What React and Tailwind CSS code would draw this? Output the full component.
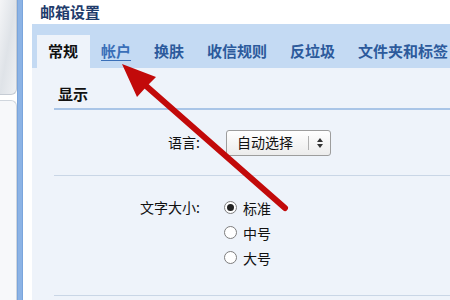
const font = { fontFamily: '"Noto Sans CJK SC", "Noto Sans", sans-serif' };

function Radio({ checked, label }) {
  return (
    <div className="flex items-center h-[25px]">
      <span className="w-[13px] h-[13px] rounded-full border border-[#7d7d7d] bg-white flex items-center justify-center">
        {checked && <span className="w-[7px] h-[7px] rounded-full bg-[#222]" />}
      </span>
      <span className="ml-[6px] text-[14px] text-[#111] leading-none">{label}</span>
    </div>
  );
}

function Arrow() {
  return (
    <svg className="absolute left-0 top-0 pointer-events-none" width="450" height="300" viewBox="0 0 450 300">
      <line x1="285" y1="208" x2="145" y2="85" stroke="#c20a0a" strokeWidth="6" strokeLinecap="round" />
      <polygon points="122,64 156,77 147,86 137,97" fill="#c20a0a" />
    </svg>
  );
}

export default function App() {
  const tabs = ['常规', '帐户', '换肤', '收信规则', '反垃圾', '文件夹和标签'];
  return (
    <div className="relative w-[450px] h-[300px] overflow-hidden bg-white flex" style={font}>
      <div className="w-[17px] shrink-0 flex flex-col">
        <div className="h-[95px] rounded-br-[6px] border-r border-b border-[#c6ccd4] bg-gradient-to-br from-[#f4f5f7] via-[#dfe3e8] to-[#eef0f3]" />
        <div className="mt-[5px] flex-1 rounded-tr-[6px] border-r border-t border-[#d0d6dd] bg-[#f7f8fa]" />
      </div>
      <div className="w-[6px] shrink-0 bg-[#8cb3e5] border-x border-[#7aa5dc]" />
      <div className="w-[9px] shrink-0 bg-white" />
      <div className="flex-1 min-w-0 flex flex-col">
        <div className="h-[24px] shrink-0 flex items-center pl-[8px] text-[15px] font-bold text-[#1f3c6c]">邮箱设置</div>
        <div className="h-[44px] shrink-0 bg-[#c4daf3] flex items-end pl-[5px]">
          {tabs.map((t, i) => (
            <div
              key={t}
              className={
                i === 0
                  ? 'h-[33px] shrink-0 pl-[11px] pr-[12px] flex items-center bg-[#eef3fa] text-[15px] font-bold text-[#111] whitespace-nowrap'
                  : 'h-[33px] shrink-0 pl-[11px] pr-[12px] flex items-center text-[15px] font-bold text-[#2c5a9c] whitespace-nowrap'
              }
            >
              {i === 1 ? <span className="underline underline-offset-[3px] text-[#3a6fb8]">{t}</span> : t}
            </div>
          ))}
        </div>
        <div className="flex-1 bg-[#eef3fa] pl-[22px]">
          <div className="h-[42px] flex items-end pl-[4px] pb-[3px] text-[15px] font-bold text-[#111] border-b-2 border-[#a9c5e7]">显示</div>
          <div className="h-[66px] flex items-center border-b border-[#c9d6e6]">
            <div className="w-[146px] text-right text-[14px] text-[#111]">语言:</div>
            <div className="ml-[26px] w-[105px] h-[26px] rounded-[3px] border border-[#9d9d9d] bg-gradient-to-b from-white to-[#ececec] flex items-center">
              <span className="pl-[10px] text-[14px] text-[#111] flex-1">自动选择</span>
              <span className="w-px h-[14px] bg-[#b0b0b0]" />
              <span className="w-[21px] flex flex-col items-center justify-center gap-[2px]">
                <svg width="6" height="4" viewBox="0 0 6 4"><path d="M0 4 L3 0 L6 4 Z" fill="#333" /></svg>
                <svg width="6" height="4" viewBox="0 0 6 4"><path d="M0 0 L3 4 L6 0 Z" fill="#333" /></svg>
              </span>
            </div>
          </div>
          <div className="h-[120px] flex items-start pt-[19px] border-b border-[#c9d6e6]">
            <div className="w-[146px] h-[25px] flex items-center justify-end text-[14px] text-[#111]">文字大小:</div>
            <div className="ml-[24px] flex flex-col">
              <Radio checked label="标准" />
              <Radio label="中号" />
              <Radio label="大号" />
            </div>
          </div>
        </div>
      </div>
      <Arrow />
    </div>
  );
}
